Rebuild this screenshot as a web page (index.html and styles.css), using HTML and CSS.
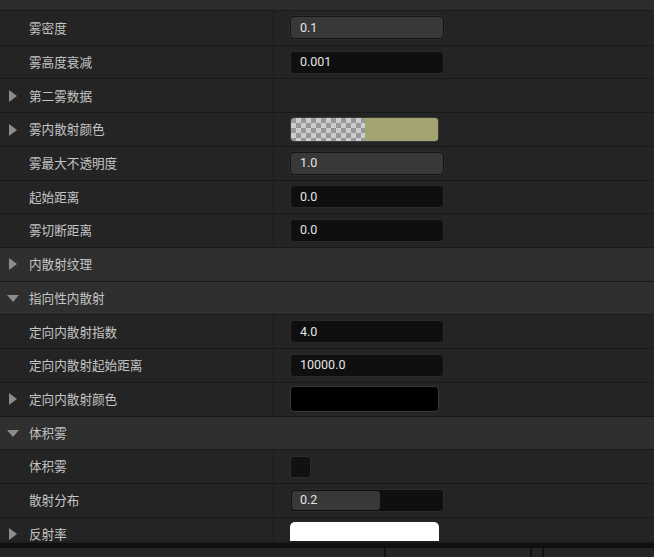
FILE: index.html
```html
<!DOCTYPE html>
<html lang="zh">
<head>
<meta charset="utf-8">
<link rel="stylesheet" href="styles.css">
</head>
<body>
<div class="panel">
  <div class="list">
    <div class="top-strip"></div>
    <div class="row"><div class="name"><span class="label">雾密度</span></div><div class="value"><div class="field slider full"><span class="num">0.1</span></div></div></div>
    <div class="row"><div class="name"><span class="label">雾高度衰减</span></div><div class="value"><div class="field text"><span class="num">0.001</span></div></div></div>
    <div class="row"><div class="name"><span class="tri right"></span><span class="label">第二雾数据</span></div><div class="value"></div></div>
    <div class="row"><div class="name"><span class="tri right"></span><span class="label">雾内散射颜色</span></div><div class="value"><div class="swatch fog"><div class="checker"></div><div class="solid"></div></div></div></div>
    <div class="row"><div class="name"><span class="label">雾最大不透明度</span></div><div class="value"><div class="field slider full"><span class="num">1.0</span></div></div></div>
    <div class="row"><div class="name"><span class="label">起始距离</span></div><div class="value"><div class="field text"><span class="num">0.0</span></div></div></div>
    <div class="row"><div class="name"><span class="label">雾切断距离</span></div><div class="value"><div class="field text"><span class="num">0.0</span></div></div></div>
    <div class="row category"><div class="cat-name"><span class="tri right"></span><span class="label">内散射纹理</span></div></div>
    <div class="row category"><div class="cat-name"><span class="tri down"></span><span class="label">指向性内散射</span></div></div>
    <div class="row"><div class="name"><span class="label">定向内散射指数</span></div><div class="value"><div class="field text"><span class="num">4.0</span></div></div></div>
    <div class="row"><div class="name"><span class="label">定向内散射起始距离</span></div><div class="value"><div class="field text"><span class="num">10000.0</span></div></div></div>
    <div class="row"><div class="name"><span class="tri right"></span><span class="label">定向内散射颜色</span></div><div class="value"><div class="swatch black"></div></div></div>
    <div class="row category"><div class="cat-name"><span class="tri down"></span><span class="label">体积雾</span></div></div>
    <div class="row"><div class="name"><span class="label">体积雾</span></div><div class="value"><div class="checkbox"></div></div></div>
    <div class="row"><div class="name"><span class="label">散射分布</span></div><div class="value"><div class="field slider partial"><div class="fill" style="width: 58%"></div><span class="num">0.2</span></div></div></div>
    <div class="row"><div class="name"><span class="tri right"></span><span class="label">反射率</span></div><div class="value"><div class="swatch white"></div></div></div>
  </div>
  <div class="gap"></div>
  <div class="band"></div>
  <div class="bottom-bar">
    <div class="seg seg1"></div>
    <div class="seg seg2"></div>
    <div class="seg seg3"></div>
    <div class="seg seg4"></div>
  </div>
</div>
</body>
</html>
```
FILE: styles.css
```css
html, body {
  margin: 0;
  padding: 0;
  background: #242424;
}
body {
  width: 654px;
  height: 557px;
  overflow: hidden;
  font-family: "Noto Sans CJK SC", "Noto Sans", sans-serif;
}
.panel {
  display: flex;
  flex-direction: column;
  height: 557px;
}
.list {
  height: 541px;
  overflow: hidden;
  display: flex;
  flex-direction: column;
  flex: none;
  background: #242424;
}
.top-strip {
  flex: none;
  height: 10px;
  background: #2c2c2c;
  border-bottom: 1px solid #1a1a1a;
}
.row {
  flex: none;
  display: flex;
  height: 33.73px;
  box-sizing: border-box;
  border-top: 1px solid #191919;
  background: #242424;
}
.top-strip + .row {
  border-top: none;
}
.row.category {
  background: #2f2f2f;
}
.name {
  width: 273px;
  flex: none;
  display: flex;
  align-items: center;
  position: relative;
  border-right: 1px solid #1a1a1a;
}
.cat-name {
  flex: 1;
  display: flex;
  align-items: center;
  position: relative;
}
.label {
  margin-left: 29px;
  font-size: 12.6px;
  color: #c4c4c4;
  line-height: 1;
  white-space: nowrap;
}
.tri {
  position: absolute;
  width: 0;
  height: 0;
}
.tri.right {
  left: 9px;
  top: 50%;
  margin-top: -6px;
  border-top: 6px solid transparent;
  border-bottom: 6px solid transparent;
  border-left: 8px solid #8c8c8c;
}
.tri.down {
  left: 7px;
  top: 50%;
  margin-top: -3px;
  border-left: 6.5px solid transparent;
  border-right: 6.5px solid transparent;
  border-top: 7px solid #8c8c8c;
}
.value {
  flex: 1;
  display: flex;
  align-items: center;
  padding-left: 16px;
}
.field {
  position: relative;
  width: 154px;
  height: 23px;
  box-sizing: border-box;
  border-radius: 4px;
  display: flex;
  align-items: center;
  overflow: hidden;
}
.field.text {
  background: #0f0f0f;
  border: 1px solid #2a2a2a;
}
.field.slider.full {
  background: #383838;
  border: 1px solid #141414;
  box-shadow: 0 0 0 1px #2b2b2b;
}
.field.slider.partial {
  background: #0f0f0f;
  border: 1px solid #2b2b2b;
}
.fill {
  position: absolute;
  left: 1px;
  top: 1px;
  bottom: 1px;
  background: #383838;
  border-radius: 3px;
}
.num {
  position: relative;
  margin-left: 9px;
  font-family: Roboto, "Noto Sans", sans-serif;
  font-size: 12.5px;
  color: #e4e4e4;
  line-height: 1;
}
.swatch {
  width: 149px;
  height: 25px;
  box-sizing: border-box;
  border-radius: 4px;
  overflow: hidden;
  display: flex;
}
.swatch.fog {
  border: 1px solid #3a3a3a;
}
.checker {
  width: 74px;
  height: 100%;
  background: repeating-conic-gradient(#cdcdcd 0 25%, #989898 0 50%) 0 0 / 10px 10px;
}
.solid {
  flex: 1;
  background: #a4a472;
}
.swatch.black {
  height: 26px;
  background: #000000;
  border: 1px solid #3a3a3a;
}
.swatch.white {
  height: 26px;
  align-self: flex-start;
  margin-top: 4px;
  background: #ffffff;
  border-radius: 5px 5px 0 0;
}
.checkbox {
  width: 21px;
  height: 22px;
  box-sizing: border-box;
  background: #111111;
  border: 1px solid #2c2c2c;
  border-radius: 3px;
}
.gap {
  flex: none;
  height: 2px;
  background: #1e1e1e;
}
.band {
  flex: none;
  height: 5px;
  background: #0f0f0f;
}
.bottom-bar {
  flex: 1;
  display: flex;
  background: #242424;
}
.seg {
  border-right: 2px solid #121212;
}
.seg1 { width: 384px; }
.seg2 { width: 144px; }
.seg3 { width: 10px; }
.seg4 { flex: 1; border-right: none; }
```
